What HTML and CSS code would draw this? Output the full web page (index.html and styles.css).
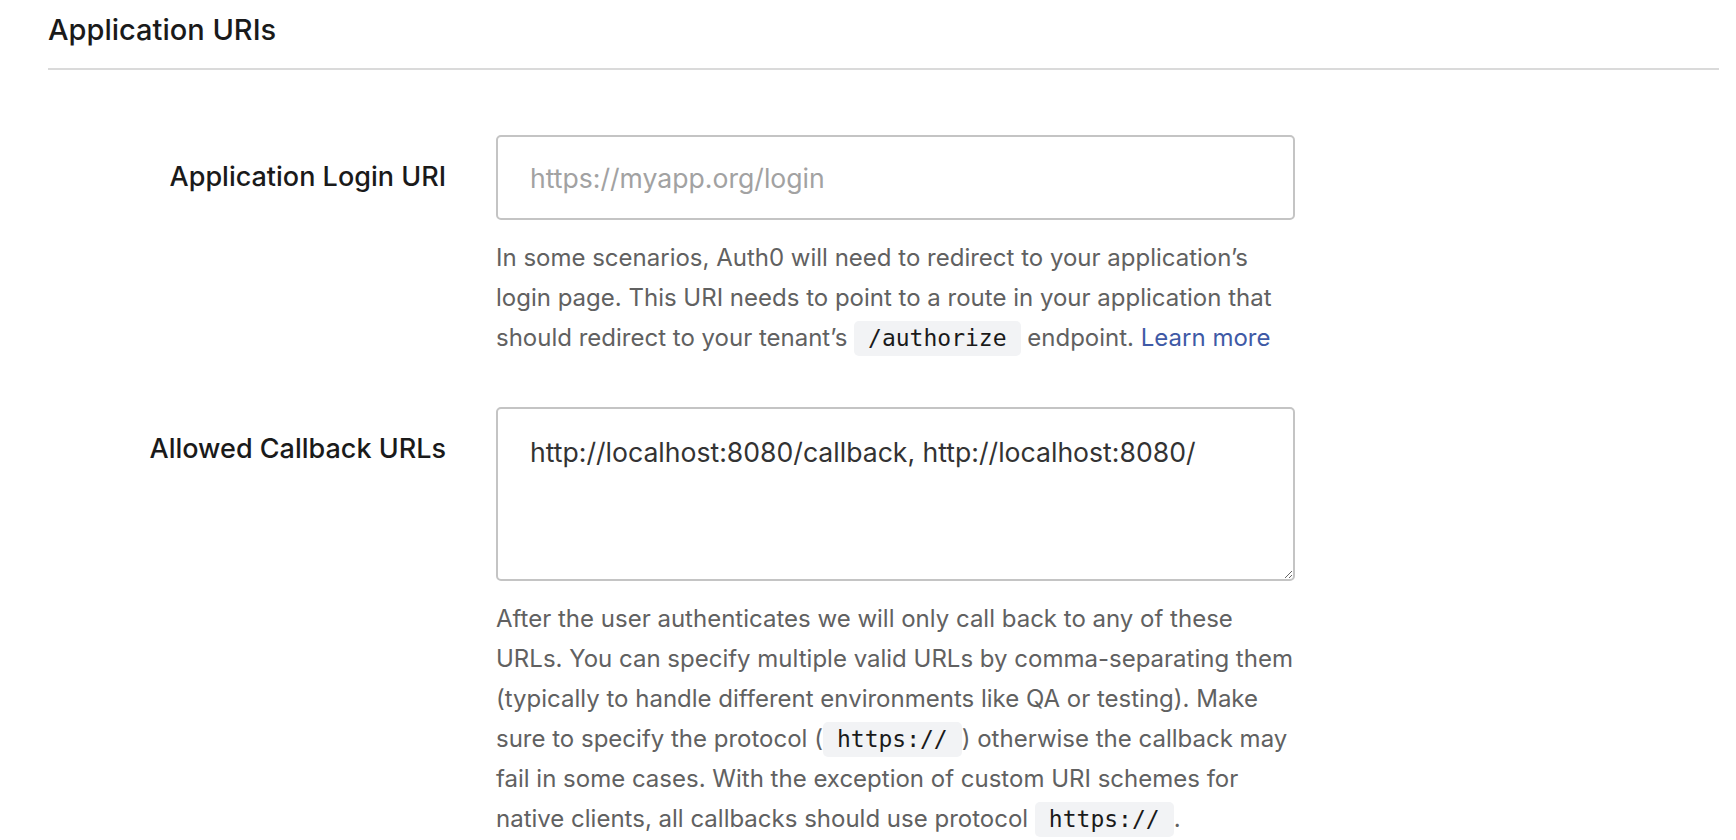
FILE: index.html
```html
<!DOCTYPE html>
<html lang="en">
<head>
<meta charset="utf-8">
<title>Application URIs</title>
<link rel="stylesheet" href="styles.css">
</head>
<body>
<section class="section">
  <h2 class="section-title">Application URIs</h2>
  <div class="form">
    <div class="row">
      <label class="label" for="login">Application Login URI</label>
      <div class="field">
        <input id="login" class="input" type="text" placeholder="https://myapp.org/login">
        <p class="help">In some scenarios, Auth0 will need to redirect to your application’s login page. This URI needs to point to a route in your application that should redirect to your tenant’s <code class="code">/authorize</code> endpoint. <a class="link" href="#">Learn more</a></p>
      </div>
    </div>
    <div class="row">
      <label class="label" for="callbacks">Allowed Callback URLs</label>
      <div class="field">
        <textarea id="callbacks" class="input textarea">http://localhost:8080/callback, http://localhost:8080/</textarea>
        <p class="help">After the user authenticates we will only call back to any of these URLs. You can specify multiple valid URLs by comma-separating them (typically to handle different environments like QA or testing). Make sure to specify the protocol (<code class="code">https://</code>) otherwise the callback may fail in some cases. With the exception of custom URI schemes for native clients, all callbacks should use protocol <code class="code">https://</code>.</p>
      </div>
    </div>
  </div>
</section>
</body>
</html>
```

FILE: styles.css
```css
html, body {
  margin: 0;
  padding: 0;
  background: #ffffff;
}

body {
  font-family: Inter, "Noto Sans", sans-serif;
  color: #1e1e1e;
}

.section {
  padding: 0 17px 0 48px;
}

.section-title {
  margin: 0;
  padding-top: 15px;
  height: 70px;
  box-sizing: border-box;
  border-bottom: 2px solid #dadada;
  font-size: 29px;
  font-weight: 500;
  line-height: 30px;
  color: #1a1a1a;
}

.form {
  padding-top: 65px;
  display: flex;
  flex-direction: column;
  gap: 49px;
}

.row {
  display: flex;
  gap: 50px;
}

.label {
  width: 398px;
  flex: none;
  text-align: right;
  font-size: 27px;
  font-weight: 500;
  line-height: 30px;
  padding-top: 27px;
  color: #1a1a1a;
}

.field {
  width: 799px;
  flex: none;
}

.input {
  display: block;
  width: 100%;
  box-sizing: border-box;
  height: 85px;
  margin: 0;
  padding: 0 32px;
  border: 2px solid #c4c4c4;
  border-radius: 5px;
  font-family: Inter, "Noto Sans", sans-serif;
  font-size: 26.6px;
  color: #333333;
  background: #ffffff;
  outline: none;
}

.input::placeholder {
  color: #a2a2a2;
}

.textarea {
  height: 174px;
  padding: 28px 32px;
  line-height: 30px;
  resize: vertical;
}

.help {
  margin: 18px 0 0;
  font-family: Inter, "Noto Sans", sans-serif;
  font-size: 24px;
  line-height: 40px;
  color: #616161;
}

.code {
  display: inline-block;
  font-family: "DejaVu Sans Mono", monospace;
  font-size: 23px;
  line-height: 27px;
  color: #1a1a1a;
  background: #f2f3f5;
  border-radius: 5px;
  padding: 4px 14px;
}

.link {
  color: #3f5aa6;
  text-decoration: none;
}
```
